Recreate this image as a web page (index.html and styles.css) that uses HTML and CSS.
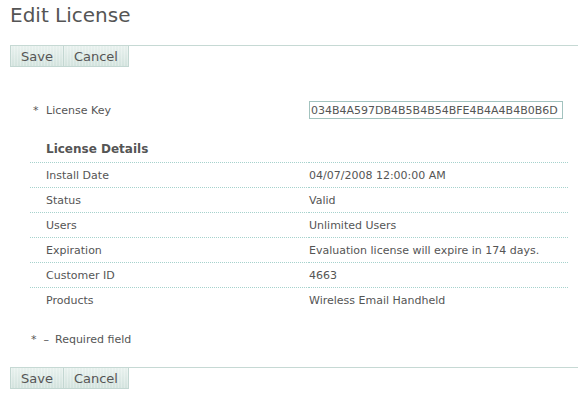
FILE: index.html
```html
<!DOCTYPE html>
<html lang="en">
<head>
    <meta charset="UTF-8">
    <title>Edit License</title>
    <link rel="stylesheet" href="styles.css">
</head>
<body>
    <h1>Edit License</h1>

    <div class="toolbar">
        <button type="button">Save</button><button type="button">Cancel</button>
    </div>

    <div class="content">
        <div class="key-row">
            <span class="req">*</span>
            <label for="licenseKey">License Key</label>
            <input type="text" id="licenseKey" value="034B4A597DB4B5B4B54BFE4B4A4B4B0B6D">
        </div>

        <h2>License Details</h2>
        <table class="details">
            <tr><td>Install Date</td><td>04/07/2008 12:00:00 AM</td></tr>
            <tr><td>Status</td><td>Valid</td></tr>
            <tr><td>Users</td><td>Unlimited Users</td></tr>
            <tr><td>Expiration</td><td>Evaluation license will expire in 174 days.</td></tr>
            <tr><td>Customer ID</td><td>4663</td></tr>
            <tr><td>Products</td><td>Wireless Email Handheld</td></tr>
        </table>

        <p class="note"><span class="note-star">*</span><span class="note-dash">&ndash;</span>Required field</p>
    </div>

    <div class="toolbar">
        <button type="button">Save</button><button type="button">Cancel</button>
    </div>
</body>
</html>
```

FILE: styles.css
```css
body {
    font-family: "DejaVu Sans", Verdana, sans-serif;
    font-size: 11px;
    color: #555;
    margin: 0;
    padding: 0 0 0 10px;
}
h1 {
    font-size: 20px;
    font-weight: normal;
    color: #555;
    margin: 0;
    padding: 3px 0 0 0;
    height: 42px;
}
.toolbar {
    border-top: 1px solid #c6d9d4;
    height: 21px;
}
.toolbar button {
    font-family: inherit;
    font-size: 13px;
    color: #555;
    height: 21px;
    margin: 0;
    padding: 0 10px;
    border: none;
    border-right: 1px solid #c3d7d2;
    border-bottom: 1px solid #c3d7d2;
    background: repeating-linear-gradient(90deg, rgba(255,255,255,0.25) 0 1px, transparent 1px 3px),
                linear-gradient(#e8f1ee, #d3e3de);
    vertical-align: top;
}
.toolbar button:first-child {
    border-left: 1px solid #c3d7d2;
}
.content {
    padding: 34px 10px 21px 20px;
}
.key-row {
    display: flex;
    align-items: center;
    height: 18px;
}
.req {
    display: inline-block;
    width: 16px;
    padding-left: 3px;
    box-sizing: border-box;
}
.key-row label {
    width: 263px;
}
.key-row input {
    font-family: inherit;
    font-size: 11px;
    color: #555;
    width: 254px;
    height: 18px;
    box-sizing: border-box;
    padding: 0 1px;
    border: 1px solid #a3c3bf;
}
h2 {
    font-size: 12px;
    font-weight: bold;
    margin: 23px 0 0 16px;
    height: 20px;
}
.details {
    border-collapse: collapse;
    width: 538px;
}
.details td {
    height: 23px;
    padding: 1px 0 0 0;
    border-top: 1px dotted #a6d2cd;
}
.details td:first-child {
    padding-left: 16px;
    width: 263px;
}
.note {
    margin: 21px 0 0 0;
}
.note-star {
    margin-left: 1px;
}
.note-dash {
    margin: 0 6px 0 7px;
}
```
